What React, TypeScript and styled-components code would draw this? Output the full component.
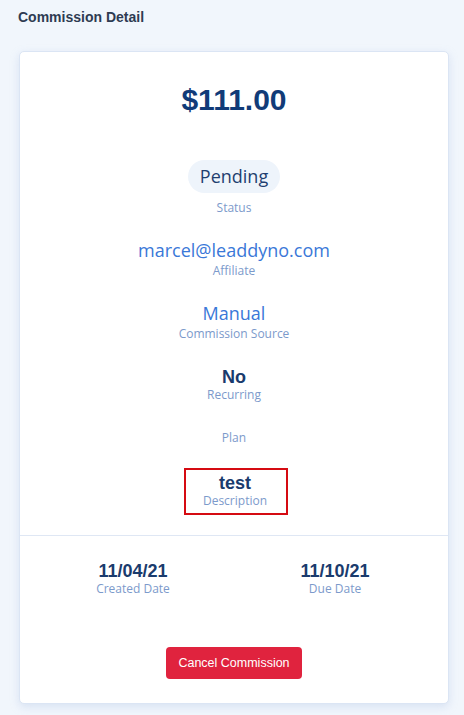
import React from "react";
import styled, { createGlobalStyle } from "styled-components";

const GlobalStyle = createGlobalStyle`
  html, body {
    margin: 0;
    padding: 0;
    background-color: #f1f6fc;
  }
  body {
    font-family: "Liberation Sans", Arial, sans-serif;
  }
`;

const Page = styled("div")`
  padding: 9px 15px 12px 18px;
  min-height: 715px;
  box-sizing: border-box;
`;

const PageTitle = styled("h1")`
  margin: 0 0 25px 0;
  font-size: 14px;
  line-height: 17px;
  font-weight: 700;
  color: #2e3b52;
`;

const Card = styled("div")`
  margin-left: 1px;
  background-color: white;
  border: 1px solid #dbe5f4;
  border-radius: 5px;
  box-shadow: 0 3px 8px rgba(170, 190, 225, 0.35);
`;

const CardBody = styled("div")`
  display: flex;
  flex-direction: column;
  align-items: center;
  padding: 31px 0 23px;
  border-bottom: 1px solid #dfe7f4;
`;

const Amount = styled("div")`
  font-size: 30px;
  line-height: 34px;
  font-weight: 700;
  color: #113b78;
  margin-bottom: 43px;
`;

// highlighted = the red review outline seen around the description block
const Field = styled("div")<{ highlighted?: boolean; gap?: number }>`
  display: flex;
  flex-direction: column;
  align-items: center;
  margin-top: ${(props) => props.gap ?? 27}px;
  padding: ${(props) => (props.highlighted ? "1px 18px 4px 16px" : "0")};
  outline: ${(props) => (props.highlighted ? "2px solid #d50b12" : "none")};
  outline-offset: ${(props) => (props.highlighted ? "1px" : "0")};
  transform: ${(props) => (props.highlighted ? "translateX(2px)" : "none")};
`;

const StatusPill = styled("div")`
  padding: 4px 12px;
  border-radius: 17px;
  background-color: #eef4fb;
  font-family: "Open Sans", sans-serif;
  font-size: 18px;
  line-height: 25px;
  color: #1f3f70;
  margin-bottom: 8px;
`;

const LinkValue = styled("div")`
  font-family: "Open Sans", sans-serif;
  font-size: 18px;
  line-height: 22px;
  color: #3a78d8;
`;

const StrongValue = styled("div")`
  font-size: 18px;
  line-height: 22px;
  font-weight: 700;
  color: #1a3b6d;
`;

const Label = styled("div")<{ spaced?: boolean }>`
  font-family: "Open Sans", sans-serif;
  font-size: 12px;
  line-height: 14px;
  color: #7c9acb;
  margin-top: ${(props) => (props.spaced ? "2.5px" : "0")};
`;

const DatesRow = styled("div")`
  display: grid;
  grid-template-columns: 1fr 1fr;
  padding: 24px 12px 0;
`;

const DateCell = styled("div")`
  display: flex;
  flex-direction: column;
  align-items: center;
`;

const Actions = styled("div")`
  display: flex;
  justify-content: center;
  padding: 51px 0 24px;
`;

const DangerButton = styled("button")`
  width: 136px;
  height: 32px;
  border: none;
  border-radius: 4px;
  background-color: #e0233e;
  color: white;
  font-family: "Liberation Sans", Arial, sans-serif;
  font-size: 12.5px;
  cursor: pointer;
  padding: 0;
`;

const commission = {
  amount: "$111.00",
  status: "Pending",
  affiliate: "marcel@leaddyno.com",
  source: "Manual",
  recurring: "No",
  plan: "",
  description: "test",
  createdAt: "11/04/21",
  dueAt: "11/10/21",
};

export default function App() {
  return (
    <>
      <GlobalStyle />
      <Page>
        <PageTitle>Commission Detail</PageTitle>
        <Card>
          <CardBody>
            <Amount>{commission.amount}</Amount>
            <StatusPill>{commission.status}</StatusPill>
            <Label>Status</Label>
            <Field gap={24}>
              <LinkValue>{commission.affiliate}</LinkValue>
              <Label spaced>Affiliate</Label>
            </Field>
            <Field gap={24.5}>
              <LinkValue>{commission.source}</LinkValue>
              <Label spaced>Commission Source</Label>
            </Field>
            <Field gap={25.5}>
              <StrongValue>{commission.recurring}</StrongValue>
              <Label>Recurring</Label>
            </Field>
            <Field gap={29}>
              {commission.plan && <StrongValue>{commission.plan}</StrongValue>}
              <Label>Plan</Label>
            </Field>
            <Field highlighted gap={26}>
              <StrongValue>{commission.description}</StrongValue>
              <Label>Description</Label>
            </Field>
          </CardBody>
          <DatesRow>
            <DateCell>
              <StrongValue>{commission.createdAt}</StrongValue>
              <Label>Created Date</Label>
            </DateCell>
            <DateCell>
              <StrongValue>{commission.dueAt}</StrongValue>
              <Label>Due Date</Label>
            </DateCell>
          </DatesRow>
          <Actions>
            <DangerButton>Cancel Commission</DangerButton>
          </Actions>
        </Card>
      </Page>
    </>
  );
}
